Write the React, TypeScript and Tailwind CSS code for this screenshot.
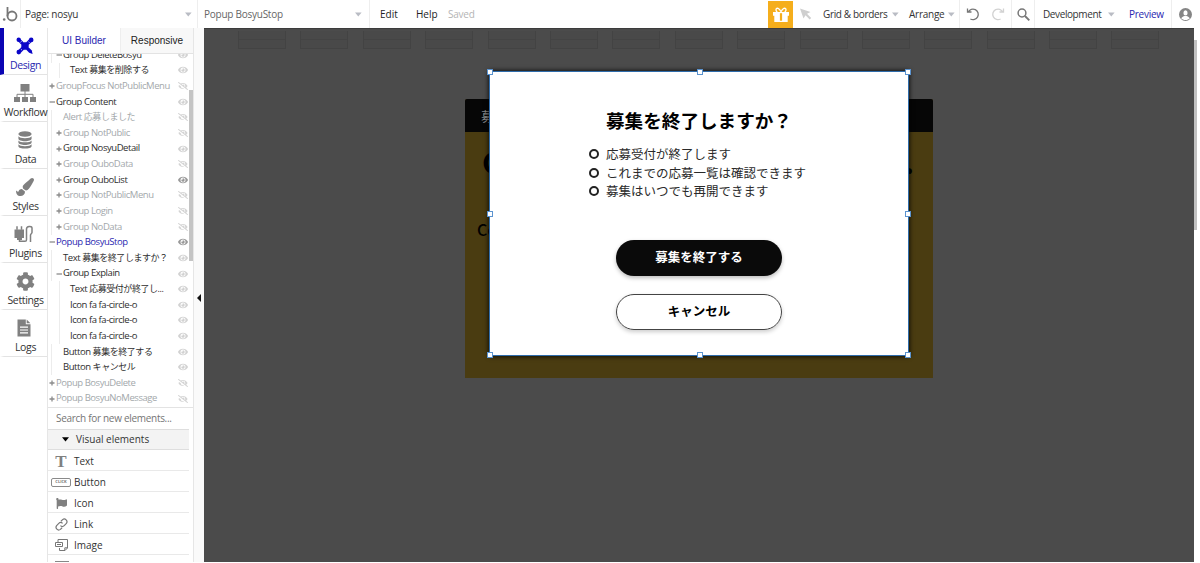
import type { ReactNode } from "react";
import { FaPaintBrush, FaCog, FaFlag, FaEye, FaEyeSlash } from "react-icons/fa";

const Caret = () => (
  <svg width="7" height="5" viewBox="0 0 7 5" className="shrink-0">
    <path d="M0 0.5h6.6L3.3 4.6z" fill="#b9bcc4" />
  </svg>
);

const DesignIcon = () => (
  <svg width="18" height="18" viewBox="0 0 18 18" fill="#0a05c8">
    <path d="M2.2 4.6 4.6 2.2 15.8 13.4 16.6 17 13.2 15.8z" />
    <path d="M13.4 2 16 4.6 4.8 15.8 2.2 13.2z" />
    <circle cx="2.7" cy="2.7" r="2.2" />
    <circle cx="15.2" cy="2.9" r="2.3" />
    <circle cx="2.8" cy="15.1" r="2.3" />
    <path d="M4.800 9 9 4.800 13.200 9 9 13.200z" />
    <path d="m4.2 5.6 1.4-1.4M12.4 4.6l1.2 1.2M4.8 12 6 13.2" stroke="#fff" strokeWidth=".7" />
  </svg>
);

const WorkflowIcon = () => (
  <svg width="22" height="18" viewBox="0 0 22 18" fill="#808080">
    <path d="M6.5 0h9v7.5h-9zM0 13h6v5H0zM8 13h6v5H8zM16 13h6v5h-6z" />
    <path d="M11 7v6M3 13v-2.7h16V13" fill="none" stroke="#808080" />
  </svg>
);

const DataIcon = () => (
  <svg width="14" height="18" viewBox="0 0 14 18" fill="#808080">
    <ellipse cx="7" cy="3" rx="6.6" ry="2.8" />
    <path d="M.4 5.2c1 2.6 12.2 2.6 13.2 0v2.3c0 3.6-13.2 3.6-13.2 0z" />
    <path d="M.4 9.4c1 2.6 12.2 2.6 13.2 0v1.9c0 3.6-13.2 3.6-13.2 0z" />
    <path d="M.4 13.2c1 2.6 12.2 2.6 13.2 0v1.7c0 3.6-13.2 3.6-13.2 0z" />
  </svg>
);

const PluginsIcon = () => (
  <svg width="20" height="18" viewBox="0 0 20 18" fill="none" className="mr-[2px]">
    <path d="M.5 4.600h9.500v8.400H8v2H3v-2H.5z" fill="#808080" />
    <path d="M3 1.200v3.600M7.500 1.200v3.600" stroke="#808080" strokeWidth="1.500" />
    <path
      d="M5.500 14v2.300H11c1 0 1.500-.6 1.500-1.600V4c0-3.300 5.500-3.300 5.500-1v4.500c0 1-1.500 1.500-1.500 2.500v7"
      stroke="#808080"
      strokeWidth="1.500"
    />
  </svg>
);

const LogsIcon = () => (
  <svg width="14" height="18" viewBox="0 0 14 18" className="mr-[3px]">
    <path d="M.5.5h8.3v4.8h4.7v12.2H.5z" fill="#808080" />
    <path d="M9.7.6l3.7 3.7H9.7z" fill="#808080" />
    <path d="M3 8.2h8M3 11h8M3 13.9h8" stroke="#fff" strokeWidth="1.2" />
  </svg>
);

const GiftIcon = () => (
  <svg width="18" height="16" viewBox="0 0 18 16" fill="none">
    <path d="M1 5h16v3.8h-1.300V15H2.300V8.800H1z" fill="#fff" />
    <path
      d="M8.900 4.800C7.500 1.500 5.800.9 4.800 1.400c-1.400.7-1 3 .6 3.500M9.100 4.800c1.400-3.300 3.100-3.900 4.100-3.400 1.400.7 1 3-.6 3.500"
      stroke="#fff"
      strokeWidth="1.300"
    />
    <path d="M9 6.200v7.500" stroke="#f5ae1c" strokeWidth="2.200" />
  </svg>
);

const navItems: { label: string; icon: ReactNode }[] = [
  { label: "Design", icon: <DesignIcon /> },
  { label: "Workflow", icon: <WorkflowIcon /> },
  { label: "Data", icon: <DataIcon /> },
  { label: "Styles", icon: <FaPaintBrush size={18} color="#808080" /> },
  { label: "Plugins", icon: <PluginsIcon /> },
  { label: "Settings", icon: <FaCog size={19} color="#808080" /> },
  { label: "Logs", icon: <LogsIcon /> },
];

type TreeRow = {
  kind?: string;
  name: string;
  depth: number;
  toggle?: "+" | "-";
  hidden?: boolean;
  active?: boolean;
  visible?: boolean;
};

const tree: TreeRow[] = [
  { name: "Group DeleteBosyu", depth: 1, toggle: "-" },
  { kind: "Text", name: "募集を削除する", depth: 2 },
  { name: "GroupFocus NotPublicMenu", depth: 0, toggle: "+", hidden: true },
  { name: "Group Content", depth: 0, toggle: "-" },
  { kind: "Alert", name: "応募しました", depth: 1, hidden: true },
  { name: "Group NotPublic", depth: 1, toggle: "+", hidden: true },
  { name: "Group NosyuDetail", depth: 1, toggle: "+" },
  { name: "Group OuboData", depth: 1, toggle: "+", hidden: true },
  { name: "Group OuboList", depth: 1, toggle: "+", visible: true },
  { name: "Group NotPublicMenu", depth: 1, toggle: "+", hidden: true },
  { name: "Group Login", depth: 1, toggle: "+", hidden: true },
  { name: "Group NoData", depth: 1, toggle: "+", hidden: true },
  { name: "Popup BosyuStop", depth: 0, toggle: "-", active: true, visible: true },
  { kind: "Text", name: "募集を終了しますか？", depth: 1 },
  { name: "Group Explain", depth: 1, toggle: "-" },
  { kind: "Text", name: "応募受付が終了し...", depth: 2 },
  { name: "Icon fa fa-circle-o", depth: 2 },
  { name: "Icon fa fa-circle-o", depth: 2 },
  { name: "Icon fa fa-circle-o", depth: 2 },
  { kind: "Button", name: "募集を終了する", depth: 1 },
  { kind: "Button", name: "キャンセル", depth: 1 },
  { name: "Popup BosyuDelete", depth: 0, toggle: "+", hidden: true },
  { name: "Popup BosyuNoMessage", depth: 0, toggle: "+", hidden: true },
];

const indents = ["w-[8px]", "w-[15px]", "w-[22px]"];

const Toggle = ({ type }: { type: "+" | "-" }) => (
  <svg width="6" height="6" viewBox="0 0 6 6" className="mr-px shrink-0">
    <path d={type === "+" ? "M0.5 3h5M3 .5v5" : "M0.5 3h5.5"} stroke="#8b8b8b" strokeWidth="1.3" />
  </svg>
);

const TreeItem = ({ row }: { row: TreeRow }) => {
  const color = row.active ? "text-[#2a27b0]" : row.hidden ? "text-[#a3a8ab]" : "text-[#2e2e2e]";
  return (
    <div className={`flex h-[15.64px] shrink-0 items-center text-[9.5px] tracking-[-0.45px] whitespace-nowrap ${color}`}>
      <span className={`flex h-full shrink-0 items-center justify-end ${indents[row.depth]}`}>
        {row.depth > 0 && <i className={`h-full w-px bg-[#ececec] ${row.depth > 1 ? "mr-[10px]" : "mr-auto ml-[3px]"}`} />}
        {row.toggle && <Toggle type={row.toggle} />}
      </span>
      {row.kind ? (
        <span>
          {row.kind} <span className="text-[9px]">{row.name}</span>
        </span>
      ) : (
        <span>{row.name}</span>
      )}
      <span className="mr-px ml-auto flex w-[11px] justify-center">
        {row.hidden ? (
          <FaEyeSlash size={10} color="#d4d4d4" />
        ) : (
          <FaEye size={10} color={row.visible ? "#999" : "#d2d2d2"} />
        )}
      </span>
    </div>
  );
};

const elements: { label: string; icon: ReactNode }[] = [
  {
    label: "Text",
    icon: <span className="font-['Liberation_Serif',serif] text-[17px] font-bold leading-none text-[#808080]">T</span>,
  },
  {
    label: "Button",
    icon: (
      <span className="flex h-[9px] w-[20px] items-center justify-center rounded-[2px] border border-[#8a8a8a] text-[4px] font-bold leading-none text-[#777]">
        CLICK
      </span>
    ),
  },
  { label: "Icon", icon: <FaFlag size={11} color="#808080" /> },
  {
    label: "Link",
    icon: (
      <svg width="13" height="13" viewBox="0 0 24 24" fill="none" stroke="#777" strokeWidth="2.2">
        <path d="M10 14a5 5 0 0 0 7 0l4-4a5 5 0 0 0-7-7l-3 3" />
        <path d="M14 10a5 5 0 0 0-7 0l-4 4a5 5 0 0 0 7 7l3-3" />
      </svg>
    ),
  },
  {
    label: "Image",
    icon: (
      <svg width="13" height="12" viewBox="0 0 13 12" fill="none" stroke="#777">
        <path d="M3 3V.5h9.500v8.500l-2.500 2.500H4.500V9" />
        <path d="M.5 3.500h7v4h-7zM12.500 8.800H9.800v2.700" />
        <path d="M2 5.500h4" />
      </svg>
    ),
  },
];

const TopBar = () => (
  <header className="flex h-[28px] shrink-0 items-center text-[10px] tracking-[-0.25px] text-[#333]">
    <div className="flex h-full w-[21px] items-center border-r border-[#eee]">
      <svg width="17" height="17" viewBox="0 0 17 17" className="ml-[2px]" fill="none">
        <circle cx="2.2" cy="13.5" r="1.3" fill="#777" />
        <path d="M5.5 1v9.2" stroke="#777" strokeWidth="1.8" />
        <circle cx="10" cy="10" r="4.5" stroke="#777" strokeWidth="1.8" />
      </svg>
    </div>
    <div className="flex h-full w-[177px] items-center justify-between border-r border-[#eee] pr-[5px] pl-[4px]">
      <span>Page: nosyu</span>
      <Caret />
    </div>
    <div className="flex h-full w-[172px] items-center justify-between border-r border-[#eee] pr-[7px] pl-[6px] text-[#666]">
      <span>Popup BosyuStop</span>
      <Caret />
    </div>
    <span className="w-[36px] pl-[10px] tracking-normal text-[#222]">Edit</span>
    <span className="ml-[10px] w-[32px] tracking-normal text-[#222]">Help</span>
    <span className="text-[#b5b5b5]">Saved</span>
    <div className="ml-auto flex h-full items-center">
      <div className="mt-px flex h-[27px] w-[25px] items-center justify-center bg-[#f5ae1c]">
        <GiftIcon />
      </div>
      <svg width="12" height="12" viewBox="0 0 12 12" className="ml-[7px]">
        <path d="M0 .5 10.5 4 7 5.8 11.2 10 9.7 11.5 5.5 7.3 3.5 10.5z" fill="#cfcfcf" />
      </svg>
      <div className="ml-[11px] flex w-[86px] items-center justify-between pr-[10px] tracking-[-0.35px] whitespace-nowrap">
        <span>Grid &amp; borders</span>
        <Caret />
      </div>
      <div className="flex h-full w-[51px] items-center justify-between border-r border-[#eee] pr-[4px]">
        <span>Arrange</span>
        <Caret />
      </div>
      <div className="flex h-full w-[52px] items-center justify-between border-r border-[#eee] px-[6px]">
        <svg width="14" height="14" viewBox="0 0 14 14" fill="none" stroke="#777" strokeWidth="1.3">
          <path d="M1.500 1.500v3.500h4M2.200 5a5.300 5.300 0 1 1 2.200 7" />
        </svg>
        <svg width="14" height="14" viewBox="0 0 14 14" fill="none" stroke="#d2d2d2" strokeWidth="1.3">
          <path d="M12.500 1.500v3.500h-4M11.800 5a5.300 5.300 0 1 0-2.200 7" />
        </svg>
      </div>
      <div className="flex h-full w-[23px] items-center justify-center border-r border-[#eee]">
        <svg width="13" height="13" viewBox="0 0 13 13" fill="none" stroke="#777">
          <circle cx="5" cy="5" r="3.9" strokeWidth="1.5" />
          <path d="m8 8 4.3 4.3" strokeWidth="1.9" />
        </svg>
      </div>
      <div className="flex w-[80px] items-center justify-between pl-[8px] tracking-[-0.4px]">
        <span>Development</span>
        <Caret />
      </div>
      <div className="flex h-full w-[57px] items-center border-r border-[#eee] pl-[14px] text-[#2a27b0]">Preview</div>
      <div className="flex w-[28px] items-center pl-[7px]">
        <svg width="13" height="13" viewBox="0 0 13 13">
          <circle cx="6.5" cy="6.5" r="6.5" fill="#858585" />
          <ellipse cx="6.5" cy="4.9" rx="2.1" ry="2.6" fill="#fff" />
          <path d="M2.2 10.200c.8-1.300 2.300-1.700 3.300-2.200h2c1 .5 2.500.9 3.300 2.200-2 2.400-6.600 2.400-8.600 0z" fill="#fff" />
        </svg>
      </div>
    </div>
  </header>
);

const SideNav = () => (
  <nav className="w-[48px] shrink-0 border-r border-[#e6e6e6] text-[10.5px] tracking-[-0.35px]">
    {navItems.map(({ label, icon }, i) => (
      <div
        key={label}
        className={`flex h-[47px] flex-col items-center border-b border-l-4 border-b-[#e3e3e3] pt-[8px] ${
          i === 0 ? "border-l-[#0a05b4] text-[#2a27b0]" : "border-l-white text-[#333]"
        }`}
      >
        <span className="flex h-[20px] items-center pr-px">{icon}</span>
        <span className="leading-[18px]">{label}</span>
      </div>
    ))}
  </nav>
);

const ElementPanel = () => (
  <aside className="flex w-[146px] shrink-0 flex-col border-r border-[#e6e6e6]">
    <div className="flex h-[26px] shrink-0 border-b border-[#e3e3e3] font-['Liberation_Sans',sans-serif] text-[10px]">
      <span className="flex w-[72px] items-center justify-center text-[#2a27b0]">UI Builder</span>
      <span className="flex flex-1 items-center justify-center border-l border-[#eee] bg-[#f8f8f8] text-[#222]">Responsive</span>
    </div>
    <div className="flex h-[354px] shrink-0 overflow-hidden border-b border-[#e3e3e3]">
      <div className="-mt-[7px] flex flex-1 flex-col">
        {tree.map((row, i) => (
          <TreeItem key={i} row={row} />
        ))}
      </div>
      <div className="mt-[36px] h-[171px] w-[4px] bg-[#c4c4c4]" />
    </div>
    <div className="mr-[4px] flex-1 overflow-hidden text-[10px] text-[#333]">
      <div className="flex h-[21px] items-center pl-[8px] tracking-[-0.3px] text-[#757575]">Search for new elements...</div>
      <div className="flex h-[21px] items-center border-y border-[#dedede] bg-[#f3f3f3] pl-[14px]">
        <svg width="7" height="5" viewBox="0 0 7 5">
          <path d="M0 .3h7L3.5 4.6z" fill="#000" />
        </svg>
        <span className="ml-[7px]">Visual elements</span>
      </div>
      {elements.map(({ label, icon }) => (
        <div key={label} className="flex h-[21.1px] items-center border-b border-[#e9e9e9] pt-[2px]">
          <span className="flex w-[26px] items-center justify-center">{icon}</span>
          <span>{label}</span>
        </div>
      ))}
      <div className="mt-[6px] ml-[7px] h-[3px] w-[14px] bg-[#888]" />
    </div>
  </aside>
);

const Handle = ({ className }: { className: string }) => (
  <i className={`absolute h-[6px] w-[6px] border border-[#5b93cf] bg-white ${className}`} />
);

const messages = ["応募受付が終了します", "これまでの応募一覧は確認できます", "募集はいつでも再開できます"];

const Popup = () => (
  <div className="absolute top-[42px] left-[285px] flex h-[285px] w-[420px] flex-col items-center border border-[#2f6cab] bg-white text-black shadow-[0_0_5px_#000]">
    <h1 className="mt-[35px] text-[18.6px] leading-[26px] font-bold">募集を終了しますか？</h1>
    <ul className="mt-[12px] w-[220px] text-[12.5px] text-[#2a2a2a]">
      {messages.map((message) => (
        <li key={message} className="flex h-[18.6px] items-center">
          <i className="mr-[7px] h-[10px] w-[10px] rounded-full border-2 border-[#222]" />
          {message}
        </li>
      ))}
    </ul>
    <button className="mt-[39px] h-[36px] w-[166px] rounded-full bg-[#0a0a0a] text-[12.5px] font-bold text-white shadow-[0_2px_4px_#0004]">
      募集を終了する
    </button>
    <button className="mt-[18px] h-[36px] w-[166px] rounded-full border border-[#444] text-[12.5px] font-bold shadow-[0_2px_4px_#0003]">
      キャンセル
    </button>
    <Handle className="-top-[3px] -left-[3px]" />
    <Handle className="-top-[3px] left-[207px]" />
    <Handle className="-top-[3px] -right-[3px]" />
    <Handle className="top-[139px] -left-[3px]" />
    <Handle className="top-[139px] -right-[3px]" />
    <Handle className="-bottom-[3px] -left-[3px]" />
    <Handle className="-bottom-[3px] left-[207px]" />
    <Handle className="-right-[3px] -bottom-[3px]" />
  </div>
);

const Canvas = () => (
  <main className="relative h-[534px] w-[990px] shrink-0 overflow-hidden border-t border-[#3c3c3c] bg-[#4b4b4b] font-['Noto_Sans_CJK_JP',sans-serif]">
    <div className="flex gap-[14.4px] pt-[2px] pl-[34px]">
      {Array.from({ length: 15 }, (_, i) => (
        <div key={i} className="h-[18px] w-[48px] shrink-0 border-x border-b border-[#434343] bg-[#494949]">
          <div className="h-[9px] border-b border-[#444]" />
        </div>
      ))}
    </div>
    <section className="absolute top-[70px] left-[261px] h-[279px] w-[468px] overflow-hidden rounded-t-[2px] bg-[#4a3c11]">
      <div className="flex h-[33px] items-center bg-[#060606] pl-[16px] text-[13px] text-[#888]">募集</div>
      <div className="flex justify-between pr-[19px] pl-[17px] text-[30px] leading-[58px] font-bold text-black">
        <span>C</span>
        <span>.</span>
      </div>
      <p className="mt-[27px] pl-[12px] text-[16px] leading-[24px] font-medium text-black">Co</p>
    </section>
    <Popup />
  </main>
);

const App = () => (
  <div className="flex h-[563px] w-[1200px] flex-col overflow-hidden bg-white font-['Open_Sans','Noto_Sans_CJK_JP',sans-serif]">
    <TopBar />
    <div className="flex h-[534px]">
      <SideNav />
      <ElementPanel />
      <div className="flex w-[10px] shrink-0 items-center justify-center bg-[#fafafa]">
        <svg width="4" height="8" viewBox="0 0 4 8" className="mt-[5px]">
          <path d="M4 0v8L0 4z" fill="#111" />
        </svg>
      </div>
      <Canvas />
      <div className="mt-[12px] h-[190px] w-[3px] bg-[#c1c1c1]" />
    </div>
  </div>
);

export default App;
